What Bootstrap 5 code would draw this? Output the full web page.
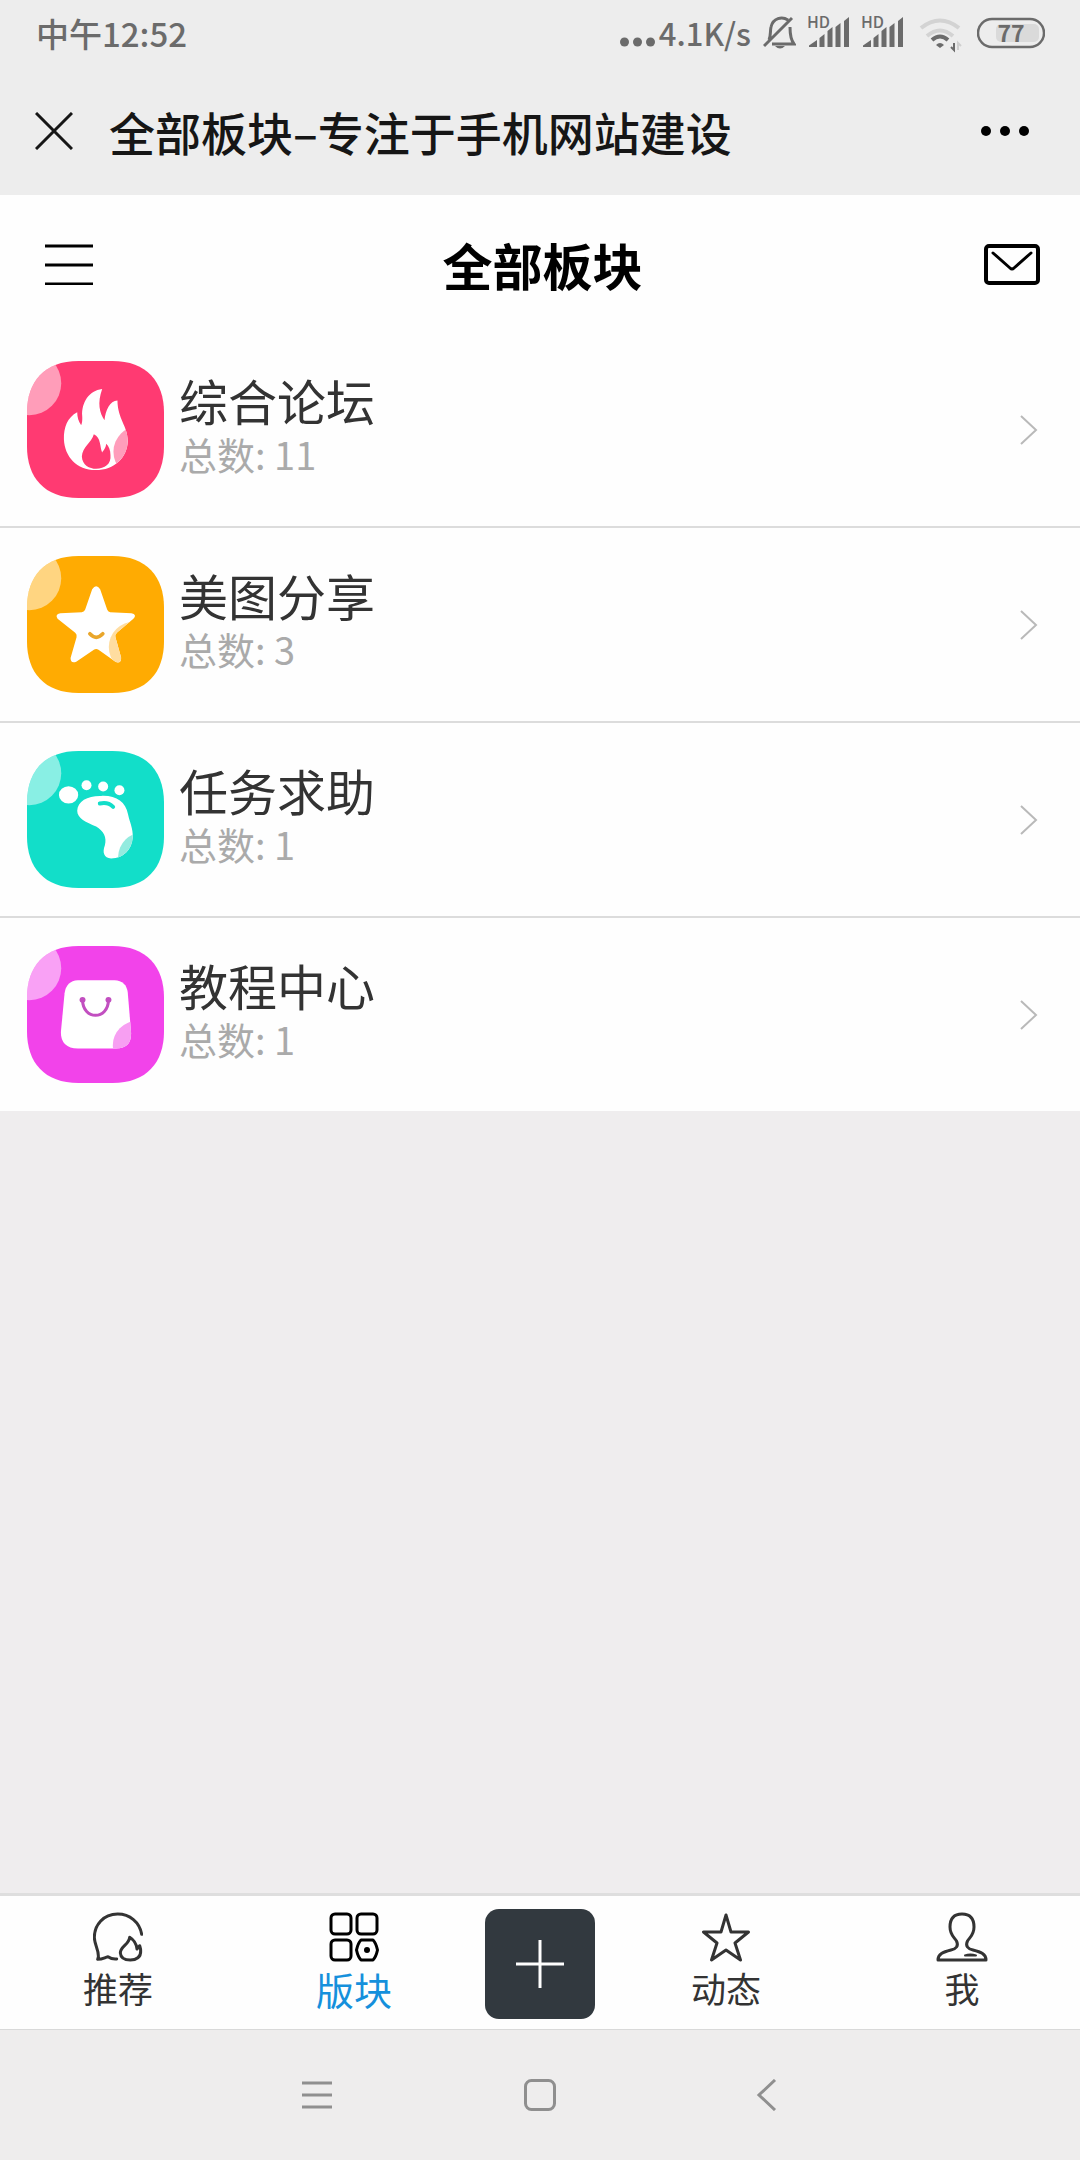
<!DOCTYPE html>
<html lang="zh-CN">
<head>
<meta charset="utf-8">
<meta name="viewport" content="width=device-width, initial-scale=1">
<title>全部板块–专注于手机网站建设</title>
<link href="https://cdn.jsdelivr.net/npm/bootstrap@5.3.0/dist/css/bootstrap.min.css" rel="stylesheet">
<style>
  body { font-family: "Noto Sans CJK SC", "Noto Sans", sans-serif; background: #efedee; color: #333; }
  svg { display: block; flex: none; }
  .chrome { background: #ededed; }
  .status { height: 66px; padding: 0 35px 0 36px; font-size: 33px; line-height: 48px; font-weight: 500; color: #6b6b6b; }
  .status-icons { gap: 12px; }
  .rate { gap: 3px; font-size: 31px; }
  .titlebar { height: 129px; padding: 0 50px 0 35px; gap: 36px; }
  .titlebar h1 { font-size: 46px; line-height: 60px; font-weight: 500; color: #161616; }
  .plain { background: none; border: 0; padding: 0; }
  .pagehead { height: 138px; padding: 0 40px 0 45px; background: #fefefe; }
  .pagehead h2 { font-size: 50px; line-height: 60px; font-weight: 700; color: #000; }
  .boards .list-group-item { background: #fefefe; border: 0; border-bottom: 2px solid #dcdcdc; padding: 28px 42px 28px 27px; gap: 15px; color: #333; }
  .board-name { font-size: 49px; line-height: 48px; }
  .board-total { font-size: 38px; line-height: 60px; color: #aaa; }
  .tabs { border-top: 3px solid #dedede; border-bottom: 1px solid #d9d9d9; height: 137px; background: #fefefe; }
  .tabs a { flex: 1 1 0; color: #333; font-size: 35px; line-height: 52px; padding-top: 16px; }
  .tabs a.current { color: #1590dc; font-size: 38px; line-height: 54px; }
  .post-cell { width: 136px; padding-top: 13px; }
  .post-btn { width: 110px; height: 110px; border-radius: 14px; background: #32393f; }
  .sysnav { height: 130px; background: #eeeded; padding: 0 302px; }
</style>
<script src="https://cdn.jsdelivr.net/npm/bootstrap@5.3.0/dist/js/bootstrap.bundle.min.js"></script>
</head>
<body>
<svg width="0" height="0" class="position-absolute" aria-hidden="true">
  <defs>
    <clipPath id="tile"><path d="M155 0H257C360 0 412 62 412 155V257C412 350 360 412 257 412H155C52 412 0 350 0 257V155C0 62 52 0 155 0Z"/></clipPath>
    <path id="flameShape" d="M308 147C268 152 246 188 248 228C249 245 247 251 245 256C237 245 233 232 233 217C204 232 192 262 193 298C195 350 232 391 288 391C345 391 384 352 385 304C385 258 355 240 354 182C331 183 318 212 315 241C300 218 293 190 308 147Z"/>
    <clipPath id="flameClip"><use href="#flameShape"/></clipPath>
    <path id="starShape" d="M278 748Q290 730 302 748L323 809Q325 816 332 817L396 820Q414 824 402 837L353 878Q346 884 348 892L365 953Q366 972 349 967L297 930Q290 926 283 930L230 966Q213 972 213 955L231 892Q233 884 227 879L174 837Q165 823 182 820L247 817Q255 816 257 809Z"/>
    <clipPath id="starClip"><use href="#starShape"/></clipPath>
    <path id="footShape" d="M233 245C234 215 265 199 305 200C350 198 378 217 386 256C391 280 401 297 400 325C397 362 372 388 335 388C313 386 308 370 316 349C323 325 312 305 290 292C260 280 233 268 233 245Z"/>
    <clipPath id="footClip"><use href="#footShape"/></clipPath>
    <path id="bagShape" d="M235 753H345Q381 755 385 790L395 910Q397 958 350 958H235Q183 957 184 908L195 792Q200 755 235 753Z"/>
    <clipPath id="bagClip"><use href="#bagShape"/></clipPath>
    <symbol id="chevron" viewBox="0 0 18 32"><path d="M1 2L16 16L1 30" fill="none" stroke="#b9b9b9" stroke-width="2"/></symbol>
    <symbol id="signal" viewBox="808 12 42 42">
      <text x="807" y="28" font-size="16" font-weight="500" fill="#6b6b6b">HD</text>
      <path fill="#6b6b6b" d="M809 47V45.500L817 40V47ZM819.500 47V38L824.500 34V47ZM827.500 47V31L832.500 27V47ZM835.500 47V27L840.500 23V47ZM844 47V21L849 17V47Z"/>
    </symbol>
  </defs>
</svg>

<div class="min-vh-100 d-flex flex-column">
  <header class="chrome">
    <div class="status d-flex align-items-center justify-content-between">
      <span>中午12:52</span>
      <div class="status-icons d-flex align-items-center">
        <div class="rate d-flex align-items-center me-n1">
          <svg width="36" height="42" viewBox="624 12 36 42" fill="#6b6b6b"><circle cx="628.500" cy="42" r="4.500"/><circle cx="641.500" cy="42" r="4.500"/><circle cx="654.500" cy="42" r="4.500"/></svg>
          <span>4.1K/s</span>
        </div>
        <svg width="33" height="42" viewBox="763 12 33 42" fill="none" stroke="#6b6b6b" stroke-width="3"><path d="M764 46L792 18M769 40C771 36 770 31 771 27C773 18 782 16 788 20M790 27C790 36 791 40 794 44H772"/><path d="M775 46H785Q780 51 775 46Z" fill="#6b6b6b" stroke="none"/></svg>
        <svg width="42" height="42"><use href="#signal"/></svg>
        <svg width="42" height="42"><use href="#signal"/></svg>
        <svg width="49" height="42" viewBox="916 12 49 42" fill="none" stroke-width="4"><path d="M921 28Q940 13 959 28M927 36Q940 25 953 36" stroke="#d3d3d3"/><path d="M932 40Q940 33 948 40" stroke="#6b6b6b"/><path d="M936 45Q940 41 944 45L940 48Z" fill="#6b6b6b"/><path d="M954 43V50L951 47" stroke="#6b6b6b" stroke-width="2"/><path d="M958 50V43L961 46" stroke="#cfcfcf" stroke-width="2"/></svg>
        <svg width="68" height="42" viewBox="977 12 68 42"><rect x="996" y="24" width="43" height="18" rx="5" fill="#dadada"/><rect x="978" y="19" width="66" height="28" rx="14" fill="none" stroke="#6b6b6b" stroke-width="2.500"/><text x="1011" y="42" font-size="23" font-weight="700" text-anchor="middle" fill="#6b6b6b">77</text></svg>
      </div>
    </div>
    <div class="titlebar d-flex align-items-center">
      <button type="button" class="plain" aria-label="关闭"><svg width="38" height="38" viewBox="0 0 38 38"><path d="M1 1L37 37M37 1L1 37" stroke="#161616" stroke-width="3"/></svg></button>
      <h1 class="m-0 flex-grow-1">全部板块–专注于手机网站建设</h1>
      <button type="button" class="plain" aria-label="更多"><svg width="50" height="10" viewBox="980 126 50 10"><circle cx="986" cy="131" r="5"/><circle cx="1005" cy="131" r="5"/><circle cx="1024" cy="131" r="5"/></svg></button>
    </div>
  </header>

  <div class="pagehead d-flex align-items-center">
    <div class="col d-flex"><button type="button" class="plain" aria-label="菜单"><svg width="48" height="42" viewBox="0 0 48 42"><path d="M0 3H48M0 22H48M0 41H48" stroke="#000" stroke-width="3"/></svg></button></div>
    <h2 class="m-0">全部板块</h2>
    <div class="col d-flex justify-content-end"><a href="#messages" aria-label="消息"><svg width="56" height="42" viewBox="0 0 56 42" fill="none" stroke="#000" stroke-width="4" stroke-linecap="round" stroke-linejoin="round"><rect x="2" y="3" width="52" height="37" rx="3"/><path d="M9 10L26 25Q28 27 30 25L47 10" stroke-width="3"/></svg></a></div>
  </div>

  <main class="flex-grow-1">
    <div class="boards list-group list-group-flush">
      <a href="#forum" class="list-group-item list-group-item-action d-flex align-items-center">
        <svg width="137" height="137" viewBox="0 0 412 412"><g clip-path="url(#tile)"><path fill="#ff3a72" d="M0 0H412V412H0Z"/><circle cx="7" cy="67" r="96" fill="#fff" opacity=".5"/></g>
          <g transform="translate(-82 -63)"><use href="#flameShape" fill="#fff"/><circle cx="420" cy="336" r="78" fill="#ff9dbb" clip-path="url(#flameClip)"/><path fill="#ff3a72" d="M283 283C276 308 248 322 247 350C248 376 270 387 290 387C315 387 336 374 333 346C333 331 328 319 320 312C319 325 314 329 308 338C301 322 305 293 283 283Z"/></g></svg>
        <span class="flex-grow-1"><span class="board-name d-block">综合论坛</span><span class="board-total d-block">总数: 11</span></span>
        <svg width="18" height="32"><use href="#chevron"/></svg>
      </a>
      <a href="#photos" class="list-group-item list-group-item-action d-flex align-items-center">
        <svg width="137" height="137" viewBox="0 0 412 412"><g clip-path="url(#tile)"><path fill="#ffab02" d="M0 0H412V412H0Z"/><circle cx="7" cy="67" r="96" fill="#fff" opacity=".5"/></g>
          <g transform="translate(-82 -648)"><use href="#starShape" fill="#fff"/><circle cx="405" cy="922" r="77" fill="#ffdda0" clip-path="url(#starClip)"/><path d="M271 882Q290 903 310 882" fill="none" stroke="#e9a62b" stroke-width="11" stroke-linecap="round"/></g></svg>
        <span class="flex-grow-1"><span class="board-name d-block">美图分享</span><span class="board-total d-block">总数: 3</span></span>
        <svg width="18" height="32"><use href="#chevron"/></svg>
      </a>
      <a href="#tasks" class="list-group-item list-group-item-action d-flex align-items-center">
        <svg width="137" height="137" viewBox="0 0 412 412"><g clip-path="url(#tile)"><path fill="#12dec9" d="M0 0H412V412H0Z"/><circle cx="7" cy="67" r="96" fill="#fff" opacity=".5"/></g>
          <g transform="translate(-82 -65)" fill="#fff"><use href="#footShape"/><ellipse cx="207" cy="197" rx="29" ry="26"/><circle cx="261" cy="168" r="15"/><circle cx="311" cy="172" r="15"/><circle cx="360" cy="183" r="15"/><circle cx="430" cy="384" r="74" fill="#93ebdf" clip-path="url(#footClip)"/><path d="M301 223Q325 217 341 233" fill="none" stroke="#12dec9" stroke-width="12" stroke-linecap="round"/></g></svg>
        <span class="flex-grow-1"><span class="board-name d-block">任务求助</span><span class="board-total d-block">总数: 1</span></span>
        <svg width="18" height="32"><use href="#chevron"/></svg>
      </a>
      <a href="#tutorials" class="list-group-item list-group-item-action d-flex align-items-center">
        <svg width="137" height="137" viewBox="0 0 412 412"><g clip-path="url(#tile)"><path fill="#f243ea" d="M0 0H412V412H0Z"/><circle cx="7" cy="67" r="96" fill="#fff" opacity=".5"/></g>
          <g transform="translate(-82 -650)"><use href="#bagShape" fill="#fff"/><circle cx="412" cy="948" r="72" fill="#f79ff2" clip-path="url(#bagClip)"/><path d="M249 812C250 874 326 874 327 812" fill="none" stroke="#c24fc0" stroke-width="9"/><circle cx="249" cy="812" r="9" fill="#c24fc0"/><circle cx="327" cy="812" r="9" fill="#c24fc0"/></g></svg>
        <span class="flex-grow-1"><span class="board-name d-block">教程中心</span><span class="board-total d-block">总数: 1</span></span>
        <svg width="18" height="32"><use href="#chevron"/></svg>
      </a>
    </div>
  </main>

  <nav class="tabs d-flex" aria-label="主导航">
    <a href="#recommend" class="d-flex flex-column align-items-center text-decoration-none">
      <svg width="50" height="50" viewBox="0 0 150 150" fill="none" stroke="#333" stroke-width="9" stroke-linecap="round" stroke-linejoin="round"><path d="M146 67C140 30 110 6 74 6C30 6 4 40 4 76C4 98 18 113 16 135L14 142C30 142 35 136 45 134C52 139 62 142 71 141"/><path d="M110 76C108 98 82 103 82 123C83 139 96 144 112 144C130 144 144 135 143 117C143 108 141 106 140 101L132 111C130 94 123 84 110 76Z"/></svg>
      <span>推荐</span>
    </a>
    <a href="#boards" class="current d-flex flex-column align-items-center text-decoration-none" aria-current="page">
      <svg width="50" height="50" viewBox="0 0 50 50" fill="none" stroke="#000" stroke-width="3"><rect x="2" y="2" width="20" height="20" rx="4"/><rect x="28" y="2" width="20" height="20" rx="4"/><rect x="2" y="28" width="20" height="20" rx="4"/><path d="M32 28H44Q47 31 48.500 38Q47 45 44 48H32Q29 45 27.500 38Q29 31 32 28Z" stroke-linejoin="round"/><circle cx="38" cy="38" r="3" fill="#000" stroke="none"/></svg>
      <span>版块</span>
    </a>
    <div class="post-cell d-flex justify-content-center">
      <button type="button" class="plain post-btn d-flex align-items-center justify-content-center" aria-label="发布"><svg width="48" height="48" viewBox="0 0 48 48"><path d="M0 24H48M24 0V48" stroke="#fff" stroke-width="3"/></svg></button>
    </div>
    <a href="#activity" class="d-flex flex-column align-items-center text-decoration-none">
      <svg width="50" height="50" viewBox="0 0 50 50" fill="none" stroke="#333" stroke-width="3" stroke-linejoin="round"><path d="M25 3L30 20H47.500L34 31L39.500 48L25 38L10.500 48L16 31L2.500 20H20Z"/></svg>
      <span>动态</span>
    </a>
    <a href="#me" class="d-flex flex-column align-items-center text-decoration-none">
      <svg width="52" height="50" viewBox="0 0 52 50" fill="none" stroke="#333" stroke-width="3" stroke-linejoin="round"><path d="M26 2C17 2 14 8 14 15C14 23 18 25 20.500 29C23 34 20 37 15 38C7 40 2 42 2 48H50C50 42 45 40 37 38C32 37 29 34 31.500 29C34 25 38 23 38 15C38 8 35 2 26 2Z"/><path d="M29 43.500Q34 41.500 40 43.500Z" fill="#333" stroke-width="2"/></svg>
      <span>我</span>
    </a>
  </nav>

  <footer class="sysnav d-flex align-items-center justify-content-between">
    <button type="button" class="plain" aria-label="最近任务"><svg width="30" height="32" viewBox="0 0 30 32"><path d="M0 4H30M0 16H30M0 28H30" stroke="#8f8f8f" stroke-width="3"/></svg></button>
    <button type="button" class="plain" aria-label="主屏幕"><svg width="32" height="32" viewBox="0 0 32 32"><rect x="1.500" y="1.500" width="29" height="29" rx="6" fill="none" stroke="#8f8f8f" stroke-width="3"/></svg></button>
    <button type="button" class="plain" aria-label="返回"><svg width="30" height="32" viewBox="-9 0 30 32"><path d="M18 1L2 16L18 31" fill="none" stroke="#8f8f8f" stroke-width="3"/></svg></button>
  </footer>
</div>
</body>
</html>
